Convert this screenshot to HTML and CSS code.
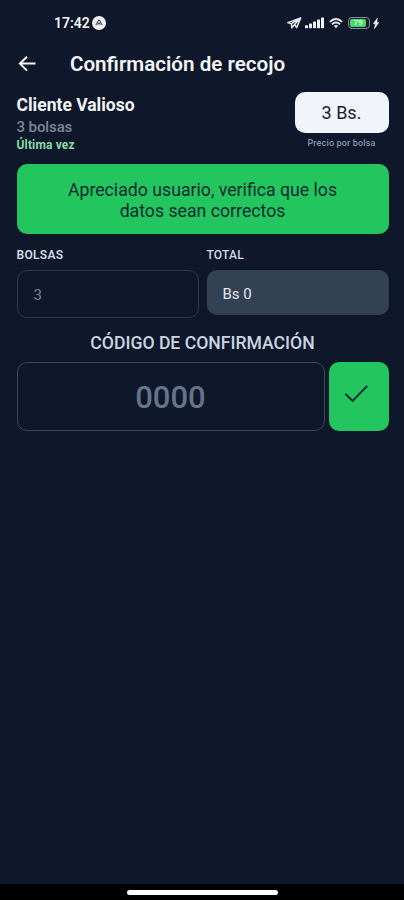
FILE: index.html
```html
<!DOCTYPE html>
<html lang="es">
<head>
<meta charset="utf-8">
<title>Confirmación de recojo</title>
<link rel="stylesheet" href="styles.css">
</head>
<body>
<div class="screen">
  <div class="status">
    <span class="clock">17:42</span>
    <svg class="badge" width="14" height="14" viewBox="0 0 14 14"><circle cx="7" cy="7" r="7" fill="#f1f2f5"/><path d="M3.8 9.3 6.3 4.6Q7 3.6 7.7 4.6L10.2 9.3M5.6 8.6 7 6.8 8.4 8.6" fill="none" stroke="#4a505c" stroke-width="1.1"/></svg>
    <svg class="plane" width="15" height="12" viewBox="0 0 15 12"><path d="M.8 5.6 13.7.9 9.6 10.6 7.6 7.4 4.8 10.8 4.5 6.9ZM4.5 6.7 13 1.2 7.6 7.4" fill="none" stroke="#e4e6eb" stroke-width="1.5" stroke-linejoin="round"/></svg>
    <svg class="signal" width="19" height="12" viewBox="0 0 19 12" fill="#f1f2f5"><rect x="0" y="8.2" width="3" height="3.1" rx=".7"/><rect x="4" y="6.6" width="3" height="4.7" rx=".7"/><rect x="8" y="4.6" width="3" height="6.7" rx=".7"/><rect x="12" y="2.4" width="3" height="8.9" rx=".7"/><rect x="16" y=".4" width="3" height="10.9" rx=".7"/></svg>
    <svg class="wifi" width="14" height="11" viewBox="0 0 14 11" fill="none" stroke="#e8eaee" stroke-width="1.8"><path d="M.8 3.8Q7-1.8 13.2 3.8M3 6.2Q7 2.7 11 6.2"/><path d="M4.8 7.8Q7 6 9.2 7.8L7 10.3Z" fill="#e8eaee" stroke="none"/></svg>
    <div class="battery"><span class="charge">79</span></div>
    <svg class="bolt" width="6" height="11" viewBox="0 0 6 11"><path d="M4.4 0 .2 5.8H2.3L1.3 11 5.9 4.4H3.9Z" fill="#f1f2f5" stroke="#f1f2f5" stroke-width=".4"/></svg>
  </div>

  <header class="header">
    <svg class="back" width="18" height="17" viewBox="0 0 18 17"><path d="M17.5 7.6H2.3M9 .7 1.9 7.6 9 14.6" fill="none" stroke="#f4f5f7" stroke-width="2"/></svg>
    <h1>Confirmación de recojo</h1>
  </header>

  <main>
    <section class="client">
      <div class="who">
        <div class="name"><span>Cliente Valioso</span></div>
        <div class="bags"><span>3 bolsas</span></div>
        <div class="last"><span>Última vez</span></div>
      </div>
      <div class="price">
        <div class="pill"><span>3 Bs.</span></div>
        <div class="per"><span>Precio por bolsa</span></div>
      </div>
    </section>

    <div class="notice"><span>Apreciado usuario, verifica que los</span><br><span>datos sean correctos</span></div>

    <section class="fields">
      <div class="field"><div class="label bolsas">BOLSAS</div><div class="input"><span>3</span></div></div>
      <div class="field"><div class="label">TOTAL</div><div class="total"><span>Bs 0</span></div></div>
    </section>

    <h2><span>CÓDIGO DE CONFIRMACIÓN</span></h2>
    <section class="confirm">
      <div class="code"><span>0000</span></div>
      <div class="ok"><svg width="26" height="20" viewBox="0 0 26 20"><path d="M1.3 9.8 8.6 17 23.2 1.9" fill="none" stroke="#10253a" stroke-width="1.9"/></svg></div>
    </section>
  </main>
  <div class="navbar"><div class="handle"></div></div>
</div>
</body>
</html>
```
FILE: styles.css
```css
* { box-sizing: border-box; }
body {
  margin: 0;
  background: #0f172a;
  font-family: Roboto, sans-serif;
  color: #f4f5f7;
}
.screen { height: 900px; display: flex; flex-direction: column; }
.status {
  height: 46px;
  padding: 0 25px 0 54px;
  display: flex;
  align-items: center;
}
.clock { font-size: 14px; font-weight: 600; width: 38px; white-space: nowrap; }
.plane { margin-left: 181px; }
.signal { margin-left: 3px; }
.wifi { margin-left: 5px; }
.battery {
  margin-left: 5px;
  width: 22px;
  height: 12px;
  border: 1px solid #8a8f9b;
  border-radius: 4px;
  padding: 1px;
}
.charge {
  display: block;
  width: 16px;
  height: 8px;
  border-radius: 2px;
  background: #45dc68;
  color: #c4f8d0;
  font-size: 8px;
  font-weight: 700;
  line-height: 8px;
  text-align: center;
}
.bolt { margin-left: 3px; }

.header { height: 36px; padding-left: 18px; display: flex; align-items: center; }
h1 { margin: 0 0 0 34px; font-size: 20.6px; line-height: 24px; font-weight: 600; white-space: nowrap; }

main { flex: 1; padding: 10px 15.5px 0 16.5px; }
.client { display: flex; justify-content: space-between; height: 72px; }
.who { padding-top: 2px; white-space: nowrap; }
.name { font-size: 17.5px; line-height: 22px; font-weight: 700; }
.bags { font-size: 15px; line-height: 22px; font-weight: 500; letter-spacing: -.1px; color: #7c879b; }
.last { font-size: 12px; line-height: 15px; font-weight: 700; letter-spacing: .15px; color: #86dda7; }
.price { width: 94px; }
.pill {
  height: 41px;
  border-radius: 10px;
  background: #f1f5f9;
  color: #18202f;
  font-size: 18px;
  line-height: 42px;
  font-weight: 400;
  text-align: center;
}
.per { margin-top: 3px; font-size: 9px; line-height: 14px; font-weight: 500; letter-spacing: .17px; color: #8a95a8; text-align: center; white-space: nowrap; }
.notice {
  height: 70px;
  padding-top: 16px;
  border-radius: 10px;
  background: #22c55e;
  color: #0c2a31;
  font-size: 17.7px;
  line-height: 21px;
  font-weight: 400;
  text-align: center;
  white-space: nowrap;
}
.fields { display: flex; gap: 8px; height: 99px; padding-top: 13px; }
.field { flex: 1; }
.label { font-size: 12px; line-height: 16px; font-weight: 500; letter-spacing: .2px; color: #d3d9e2; margin-bottom: 7px; }
.bolsas { font-weight: 600; letter-spacing: .3px; }
.input, .total { border-radius: 10px; padding-left: 16px; font-size: 15px; }
.input { height: 48px; border: 1px solid #2d3a4e; line-height: 49px; color: #75819a; }
.total { height: 45px; background: #334155; color: #e2e8f0; line-height: 48px; }
h2 { margin: 0; font-size: 17.6px; line-height: 21px; font-weight: 500; color: #cbd5e1; text-align: center; white-space: nowrap; }
.confirm { margin-top: 8px; display: flex; gap: 4px; height: 69px; }
.code {
  flex: 1;
  border: 1px solid #3a475a;
  border-radius: 10px;
  color: #64748b;
  font-size: 31px;
  line-height: 69px;
  font-weight: 500;
  text-align: center;
}
.ok { width: 60px; border-radius: 10px; background: #22c55e; display: flex; justify-content: center; padding: 22px 3px 0 0; }
.navbar { height: 16px; background: #000; display: flex; justify-content: center; align-items: center; }
.handle { width: 151px; height: 5px; border-radius: 3px; background: #fff; }
```
